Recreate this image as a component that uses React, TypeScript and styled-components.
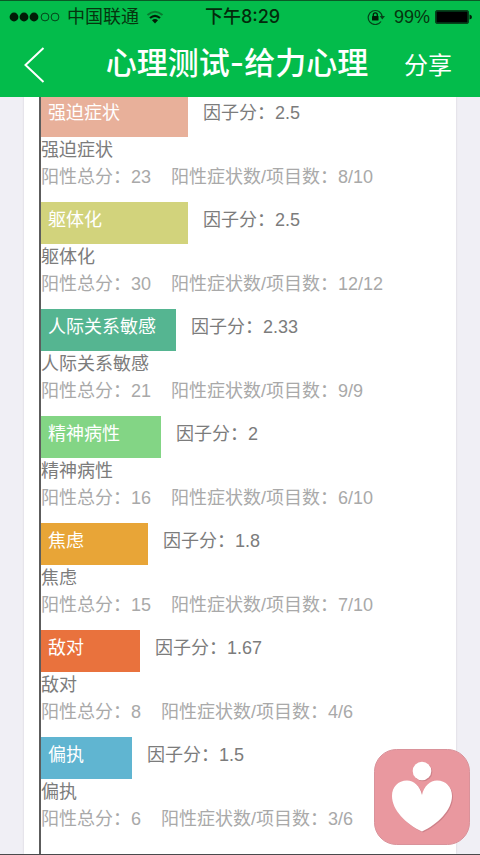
import React from "react";
import styled, { createGlobalStyle } from "styled-components";

const GlobalStyle = createGlobalStyle`
  * { box-sizing: border-box; }
  body {
    margin: 0;
    background: #f0eff5;
    font-family: "Liberation Sans", "Noto Sans CJK SC", sans-serif;
    font-size: 18px;
  }
`;

const Screen = styled.div`
  display: flex;
  flex-direction: column;
  height: 100vh;
  overflow: hidden;
  border-bottom: 1px solid #4a4a4c;
`;

const Header = styled.header`
  flex: none;
  position: relative;
  z-index: 1;
  background: #03bc4b;
  border-top: 1px solid #0a5a26;
`;

const StatusBar = styled.div`
  display: grid;
  grid-template-columns: 1fr auto 1fr;
  align-items: center;
  height: 32px;
  padding: 0 8px 0 9px;
  color: #06350f;
  line-height: 32px;
`;

const StatusGroup = styled.div<{ $end?: boolean }>`
  display: flex;
  align-items: center;
  justify-content: ${(p) => (p.$end ? "flex-end" : "flex-start")};
  gap: ${(p) => (p.$end ? "5px" : "7px")};
`;

const Clock = styled.time`
  padding-left: 4px;
  font-family: Inter, "Noto Sans CJK SC", sans-serif;
  font-weight: 500;
  color: #032a0b;
`;

const LockIcon = styled.svg`
  margin-right: 4px;
`;

const NavBar = styled.div`
  display: grid;
  grid-template-columns: 80px 1fr 80px;
  align-items: center;
  height: 64px;
  color: #fff;
`;

const NavButton = styled.button`
  display: flex;
  align-items: center;
  height: 64px;
  border: 0;
  background: none;
  color: inherit;
  font-family: inherit;
  font-size: 24px;
  cursor: pointer;
`;

const BackButton = styled(NavButton)`
  padding: 0 24px;
`;

const ShareButton = styled(NavButton)`
  padding: 0 4px 4px;
`;

const Title = styled.h1`
  margin: 0;
  padding: 0 6px 4px 0;
  font-family: Inter, "Noto Sans CJK SC", sans-serif;
  font-size: 31px;
  font-weight: 500;
  line-height: 56px;
  text-align: center;
  white-space: nowrap;
`;

const Card = styled.main`
  display: flex;
  flex-direction: column;
  flex: 1;
  min-height: 0;
  overflow: hidden;
  margin: 0 24px;
  padding: 0 15px;
  background: #fff;
  box-shadow: 0 0 2px #cfced6;
`;

const Chart = styled.ul`
  flex: 1 0 auto;
  margin: -2px 0 0;
  padding: 0;
  list-style: none;
  border-left: 2px solid #5c5c5c;
  white-space: nowrap;
`;

const Factor = styled.li`
  padding-bottom: 11px;
`;

const BarLine = styled.div`
  display: flex;
  gap: 15px;
  line-height: 37px;
  color: #7c7c7c;
`;

const Bar = styled.div<{ $width: number; $color: string }>`
  width: ${(p) => p.$width}px;
  height: 42px;
  padding-left: 7px;
  background: ${(p) => p.$color};
  color: #fff;
`;

const Name = styled.div`
  line-height: 27px;
  color: #7c7c7c;
`;

const Detail = styled.div`
  display: flex;
  gap: 20px;
  line-height: 27px;
  color: #a9a9a9;
`;

const HeartButton = styled.button`
  position: fixed;
  right: 10px;
  bottom: 10px;
  width: 96px;
  height: 96px;
  padding: 0;
  border: 0;
  background: none;
  cursor: pointer;
`;

type FactorData = {
  name: string;
  score: string;
  width: number;
  color: string;
  total: number;
  items: string;
};

const factors: FactorData[] = [
  { name: "强迫症状", score: "2.5", width: 147, color: "#e8b09a", total: 23, items: "8/10" },
  { name: "躯体化", score: "2.5", width: 147, color: "#d2d37c", total: 30, items: "12/12" },
  { name: "人际关系敏感", score: "2.33", width: 135, color: "#55b591", total: 21, items: "9/9" },
  { name: "精神病性", score: "2", width: 120, color: "#83d585", total: 16, items: "6/10" },
  { name: "焦虑", score: "1.8", width: 107, color: "#e8a537", total: 15, items: "7/10" },
  { name: "敌对", score: "1.67", width: 99, color: "#e9723d", total: 8, items: "4/6" },
  { name: "偏执", score: "1.5", width: 91, color: "#60b5d1", total: 6, items: "3/6" },
];

const SignalDots = () => (
  <svg width="51" height="10" viewBox="0 0 51 10" aria-hidden="true">
    {[5, 15, 25].map((x) => (
      <circle key={x} cx={x} cy="5" r="4.4" fill="#021d07" />
    ))}
    {[36, 46].map((x) => (
      <circle key={x} cx={x} cy="5" r="3.9" fill="none" stroke="#06431a" strokeWidth="1" />
    ))}
  </svg>
);

const WifiIcon = () => (
  <svg width="18" height="14" viewBox="0 0 18 14" fill="none" aria-hidden="true">
    <path d="M1.5 5Q9-1.5 16.5 5" stroke="#087a2e" strokeWidth="2" />
    <path d="M4 8Q9 3.6 14 8" stroke="#021d07" strokeWidth="2.2" />
    <path d="M6 10.3Q9 7.8 12 10.3L9 13.4Z" fill="#021d07" />
  </svg>
);

const RotationLock = () => (
  <LockIcon width="18" height="16" viewBox="0 0 18 16" fill="none" aria-hidden="true">
    <path d="M14 12.5A7 7 0 1 1 15.2 8" stroke="#06431a" strokeWidth="1.2" />
    <path d="M12.6 7H18L15.3 10.5Z" fill="#06431a" />
    <rect x="5" y="7" width="6.5" height="4.6" rx=".5" fill="#021d07" />
    <path d="M6.3 7V5.8a2 2 0 0 1 4 0V7" stroke="#021d07" strokeWidth="1.3" />
  </LockIcon>
);

const Battery = () => (
  <svg width="37" height="14" viewBox="0 0 37 14" aria-hidden="true">
    <rect x=".5" y=".5" width="33" height="13" rx="1.5" fill="#03602a" stroke="#06431a" />
    <rect x="1.5" y="1.5" width="31" height="11" fill="#000" />
    <path d="M34.5 4.5Q37 5 37 7T34.5 9.5Z" fill="#021d07" />
  </svg>
);

const heartPath =
  "M48 46C46 37 40 31.5 33 31.5C24 31.5 18 38 18 47C18 61 32 75 48 82.5C64 75 78 61 78 47C78 38 72 31.5 63 31.5C56 31.5 50 37 48 46Z";

const HeartPerson = () => (
  <svg width="96" height="96" viewBox="0 0 96 96" aria-hidden="true">
    <rect x=".5" y=".5" width="95" height="95" rx="22" fill="#e9989f" stroke="#d9929a" />
    <g fill="#b96f78" opacity=".55" transform="translate(1 1)">
      <circle cx="48" cy="22" r="9.3" />
      <path d={heartPath} />
    </g>
    <g fill="#fff">
      <circle cx="48" cy="22" r="9.3" />
      <path d={heartPath} />
    </g>
  </svg>
);

export default function App() {
  return (
    <>
      <GlobalStyle />
      <Screen>
        <Header>
          <StatusBar>
            <StatusGroup>
              <SignalDots />
              <span>中国联通</span>
              <WifiIcon />
            </StatusGroup>
            <Clock>下午8:29</Clock>
            <StatusGroup $end>
              <RotationLock />
              <span>99%</span>
              <Battery />
            </StatusGroup>
          </StatusBar>
          <NavBar>
            <BackButton aria-label="返回">
              <svg width="21" height="36" viewBox="0 0 21 36" fill="none" aria-hidden="true">
                <path d="M19.5 1L1.5 18L19.5 35" stroke="#fff" strokeWidth="2" />
              </svg>
            </BackButton>
            <Title>心理测试-给力心理</Title>
            <ShareButton>分享</ShareButton>
          </NavBar>
        </Header>
        <Card>
          <Chart>
            {factors.map((f) => (
              <Factor key={f.name}>
                <BarLine>
                  <Bar $width={f.width} $color={f.color}>{f.name}</Bar>
                  <span>因子分：{f.score}</span>
                </BarLine>
                <Name>{f.name}</Name>
                <Detail>
                  <span>阳性总分：{f.total}</span>
                  <span>阳性症状数/项目数：{f.items}</span>
                </Detail>
              </Factor>
            ))}
          </Chart>
        </Card>
        <HeartButton aria-label="给力心理">
          <HeartPerson />
        </HeartButton>
      </Screen>
    </>
  );
}
